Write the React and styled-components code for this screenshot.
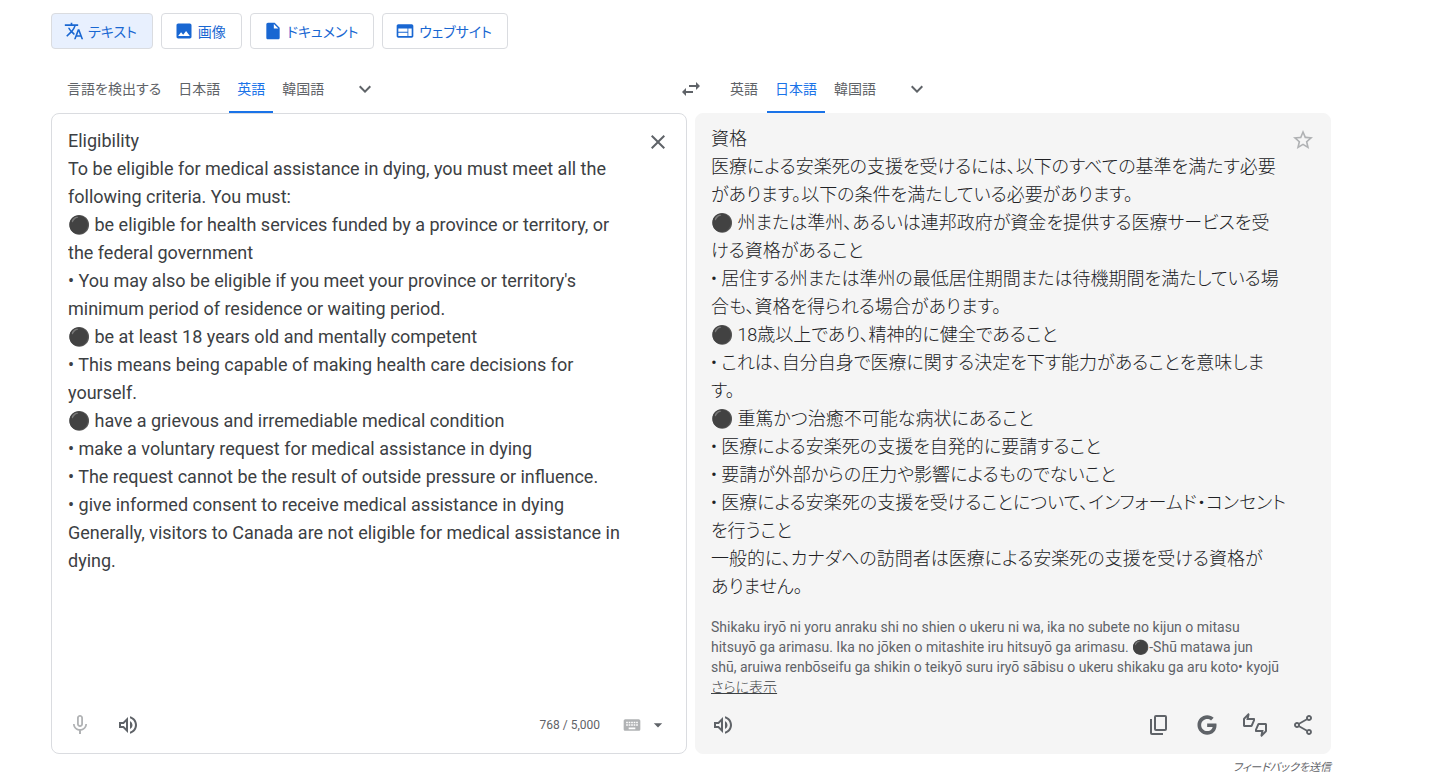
import React, { useEffect } from "react";
import styled, { createGlobalStyle, css } from "styled-components";
import {
  MdTranslate,
  MdImage,
  MdInsertDriveFile,
  MdWeb,
  MdExpandMore,
  MdSwapHoriz,
  MdClose,
  MdStarBorder,
  MdMicNone,
  MdOutlineVolumeUp,
  MdOutlineThumbsUpDown,
  MdOutlineShare,
  MdKeyboard,
  MdArrowDropDown,
} from "react-icons/md";
import { FaGoogle } from "react-icons/fa";

const GlobalStyle = createGlobalStyle`
  *, *::before, *::after {
    box-sizing: border-box;
  }

  body {
    margin: 0;
    background: #fff;
    color: #3c4043;
    font-family: Roboto, "Noto Sans CJK JP", sans-serif;
    font-feature-settings: "palt";
  }

  button, textarea {
    font: inherit;
    font-feature-settings: inherit;
    color: inherit;
    border: 0;
    padding: 0;
    margin: 0;
    background: none;
  }

  button {
    cursor: pointer;
  }
`;

// Styled Component
const Page = styled.main`
  max-width: 1331px;
  padding: 13px 0 0 51px;
`;

const ModeNav = styled.nav`
  display: flex;
  gap: 8px;
`;

const ModeButton = styled.button`
  display: flex;
  align-items: center;
  gap: 4px;
  height: 36px;
  padding: 0 15px 0 12px;
  border: 1px solid #dadce0;
  border-radius: 4px;
  background: ${(props) => (props.$active ? "#e8f0fe" : "#fff")};
  color: #1967d2;
  font-size: 14px;

  svg {
    width: 20px;
    height: 20px;
  }
`;

const LanguageBar = styled.div`
  display: grid;
  grid-template-columns: 1fr 40px 1fr;
  height: 48px;
  margin-top: 16px;
`;

const TabList = styled.div`
  display: flex;
  gap: 1px;
  padding-left: ${(props) => (props.$target ? "11px" : "8px")};
`;

const Tab = styled.button`
  padding: 0 8px;
  border-bottom: 2px solid transparent;
  color: #5f6368;
  font-size: 14px;

  ${(props) =>
    props.$active &&
    css`
      border-bottom-color: #1a73e8;
      color: #1a73e8;
    `}
`;

const IconButton = styled.button`
  display: flex;
  align-items: center;
  justify-content: center;
  width: ${(props) => props.$width || "48px"};
  height: 48px;
  color: ${(props) => (props.$muted ? "#b0b2b4" : "#5f6368")};
`;

const MoreButton = styled(IconButton)`
  margin-left: 8px;
`;

const Panels = styled.div`
  display: grid;
  grid-template-columns: 1fr 1fr;
  gap: 8px;
`;

const Panel = styled.section`
  display: flex;
  flex-direction: column;
  min-height: 640px;
  border: 1px solid ${(props) => (props.$target ? "#f5f5f5" : "#dadce0")};
  border-radius: 8px;
  background: ${(props) => (props.$target ? "#f5f5f5" : "#fff")};
`;

const PanelBody = styled.div`
  display: flex;
  align-items: flex-start;
  flex: 1;
  padding: ${(props) => (props.$target ? "11px 3px 0 15px" : "13px 4px 0 16px")};

  & > ${IconButton} {
    margin-top: -9px;
  }
`;

const SourceText = styled.textarea`
  flex: 1;
  min-width: 0;
  margin-right: 8px;
  font-size: 18px;
  line-height: 28px;
  resize: none;
  outline: 0;
  overflow: hidden;
`;

const Result = styled.div`
  flex: 1;
  min-width: 0;
`;

const TargetText = styled.p`
  margin: 0 -8px 16px 0;
  color: #202124;
  font-size: 18px;
  font-weight: 300;
  line-height: 28px;
  white-space: pre-line;
`;

const Romanization = styled.p`
  margin: 0;
  color: #5f6368;
  font-size: 14px;
  line-height: 20px;
`;

const ShowMore = styled.button`
  display: block;
  color: #3c4043;
  font-size: 14px;
  font-weight: 300;
  line-height: 20px;
  text-decoration: underline;
`;

const Toolbar = styled.div`
  display: flex;
  align-items: center;
  height: 56px;
  padding: ${(props) => (props.$target ? "0 3px" : "0 18px 0 4px")};
`;

const Spacer = styled.div`
  flex: 1;
`;

const Counter = styled.span`
  margin-right: 16px;
  color: #5f6368;
  font-size: 12px;
`;

const Feedback = styled.a`
  display: block;
  margin-top: 4px;
  color: #5f6368;
  font-size: 11px;
  font-style: italic;
  line-height: 20px;
  text-align: right;
  text-decoration: none;
`;

const modes = [
  { label: "テキスト", Icon: MdTranslate, active: true },
  { label: "画像", Icon: MdImage },
  { label: "ドキュメント", Icon: MdInsertDriveFile },
  { label: "ウェブサイト", Icon: MdWeb },
];

const sourceText = `Eligibility
To be eligible for medical assistance in dying, you must meet all the following criteria. You must:
⚫ be eligible for health services funded by a province or territory, or the federal government
• You may also be eligible if you meet your province or territory's minimum period of residence or waiting period.
⚫ be at least 18 years old and mentally competent
• This means being capable of making health care decisions for yourself.
⚫ have a grievous and irremediable medical condition
• make a voluntary request for medical assistance in dying
• The request cannot be the result of outside pressure or influence.
• give informed consent to receive medical assistance in dying
Generally, visitors to Canada are not eligible for medical assistance in dying.`;

const targetText = `資格
医療による安楽死の支援を受けるには、以下のすべての基準を満たす必要があります。以下の条件を満たしている必要があります。
⚫ 州または準州、あるいは連邦政府が資金を提供する医療サービスを受
ける資格があること
• 居住する州または準州の最低居住期間または待機期間を満たしている場合も、資格を得られる場合があります。
⚫ 18歳以上であり、精神的に健全であること
• これは、自分自身で医療に関する決定を下す能力があることを意味します。
⚫ 重篤かつ治癒不可能な病状にあること
• 医療による安楽死の支援を自発的に要請すること
• 要請が外部からの圧力や影響によるものでないこと
• 医療による安楽死の支援を受けることについて、インフォームド・コンセントを行うこと
一般的に、カナダへの訪問者は医療による安楽死の支援を受ける資格が
ありません。`;

const CopyIcon = () => (
  <svg width="24" height="24" viewBox="0 0 24 24" fill="currentColor">
    <path d="M9 18a2 2 0 0 1-2-2V4a2 2 0 0 1 2-2h9a2 2 0 0 1 2 2v12a2 2 0 0 1-2 2H9zm0-2h9V4H9v12zm-4 6a2 2 0 0 1-2-2V6h2v14h11v2H5z" />
  </svg>
);

const LanguageTabs = ({ languages, active, target }) => (
  <TabList $target={target}>
    {languages.map((name) => (
      <Tab key={name} type="button" $active={name === active}>
        {name}
      </Tab>
    ))}
    <MoreButton type="button" aria-label="その他の言語">
      <MdExpandMore size={24} />
    </MoreButton>
  </TabList>
);

const App = () => {
  useEffect(() => {
    document.title = "翻訳";
  }, []);

  return (
    <Page>
      <GlobalStyle />
      <ModeNav>
        {modes.map(({ label, Icon, active }) => (
          <ModeButton key={label} type="button" $active={active}>
            <Icon />
            {label}
          </ModeButton>
        ))}
      </ModeNav>

      <LanguageBar>
        <LanguageTabs
          languages={["言語を検出する", "日本語", "英語", "韓国語"]}
          active="英語"
        />
        <IconButton type="button" $width="40px" aria-label="言語を入れ替える">
          <MdSwapHoriz size={24} />
        </IconButton>
        <LanguageTabs
          languages={["英語", "日本語", "韓国語"]}
          active="日本語"
          target
        />
      </LanguageBar>

      <Panels>
        <Panel>
          <PanelBody>
            <SourceText
              aria-label="原文"
              rows={16}
              spellCheck={false}
              defaultValue={sourceText}
            />
            <IconButton type="button" aria-label="原文を消去">
              <MdClose size={24} />
            </IconButton>
          </PanelBody>
          <Toolbar>
            <IconButton type="button" $muted aria-label="音声入力">
              <MdMicNone size={24} />
            </IconButton>
            <IconButton type="button" aria-label="原文を聞く">
              <MdOutlineVolumeUp size={24} />
            </IconButton>
            <Spacer />
            <Counter>768 / 5,000</Counter>
            <IconButton type="button" $muted $width="32px" aria-label="キーボード">
              <MdKeyboard size={20} />
            </IconButton>
            <IconButton type="button" $width="20px" aria-label="入力方法">
              <MdArrowDropDown size={20} />
            </IconButton>
          </Toolbar>
        </Panel>

        <Panel $target>
          <PanelBody $target>
            <Result>
              <TargetText lang="ja">{targetText}</TargetText>
              <Romanization>
                Shikaku iryō ni yoru anraku shi no shien o ukeru ni wa, ika no
                subete no kijun o mitasu hitsuyō ga arimasu. Ika no jōken o
                mitashite iru hitsuyō ga arimasu. ⚫-Shū matawa jun shū, aruiwa
                renbōseifu ga shikin o teikyō suru iryō sābisu o ukeru shikaku
                ga aru koto• kyojū
              </Romanization>
              <ShowMore type="button">さらに表示</ShowMore>
            </Result>
            <IconButton type="button" $muted aria-label="翻訳を保存">
              <MdStarBorder size={24} />
            </IconButton>
          </PanelBody>
          <Toolbar $target>
            <IconButton type="button" aria-label="翻訳を聞く">
              <MdOutlineVolumeUp size={24} />
            </IconButton>
            <Spacer />
            <IconButton type="button" aria-label="翻訳をコピー">
              <CopyIcon />
            </IconButton>
            <IconButton type="button" aria-label="検索">
              <FaGoogle size={20} />
            </IconButton>
            <IconButton type="button" aria-label="翻訳を評価">
              <MdOutlineThumbsUpDown size={24} />
            </IconButton>
            <IconButton type="button" aria-label="翻訳を共有">
              <MdOutlineShare size={24} />
            </IconButton>
          </Toolbar>
        </Panel>
      </Panels>

      <Feedback href="#feedback">フィードバックを送信</Feedback>
    </Page>
  );
};

export default App;
